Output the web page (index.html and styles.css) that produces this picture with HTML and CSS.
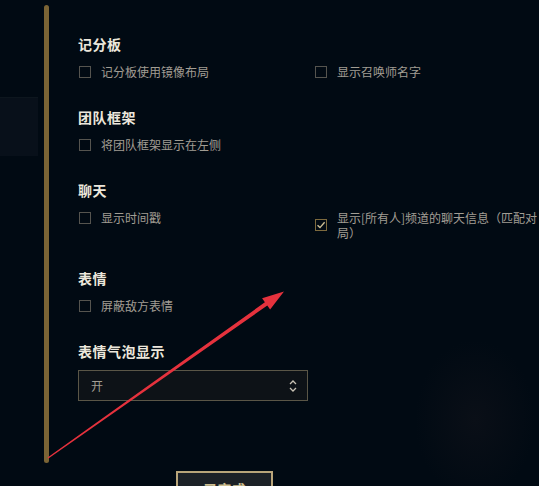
FILE: index.html
```html
<!DOCTYPE html>
<html lang="zh-CN">
<head>
    <meta charset="UTF-8">
    <meta name="viewport" content="width=device-width, initial-scale=1.0">
    <title>界面设置</title>
    <link rel="stylesheet" href="styles.css">
</head>
<body>
    <div class="page">
        <div class="side">
            <div class="side-panel"></div>
        </div>
        <div class="rail"></div>

        <div class="content">
            <div class="section">
                <div class="section-title">记分板</div>
                <div class="options">
                    <div class="option"><span class="box"></span><span class="label">记分板使用镜像布局</span></div>
                    <div class="option"><span class="box"></span><span class="label">显示召唤师名字</span></div>
                </div>
            </div>

            <div class="section">
                <div class="section-title">团队框架</div>
                <div class="options">
                    <div class="option"><span class="box"></span><span class="label">将团队框架显示在左侧</span></div>
                </div>
            </div>

            <div class="section">
                <div class="section-title">聊天</div>
                <div class="options">
                    <div class="option"><span class="box"></span><span class="label">显示时间戳</span></div>
                    <div class="option">
                        <span class="box checked">
                            <svg width="10" height="10" viewBox="0 0 10 10"><path d="M1.5 5.2 L4 7.6 L8.6 2.2" fill="none" stroke="#cdbf96" stroke-width="1.4"/></svg>
                        </span>
                        <span class="label wide">显示[所有人]频道的聊天信息（匹配对局）</span>
                    </div>
                </div>
            </div>

            <div class="section">
                <div class="section-title">表情</div>
                <div class="options">
                    <div class="option"><span class="box"></span><span class="label">屏蔽敌方表情</span></div>
                </div>
            </div>

            <div class="section">
                <div class="section-title">表情气泡显示</div>
                <div class="select">
                    <span class="select-value">开</span>
                    <svg class="select-arrows" width="8" height="14" viewBox="0 0 8 14">
                        <path d="M1 5 L4 2 L7 5" fill="none" stroke="#c8c2b4" stroke-width="1.3"/>
                        <path d="M1 9 L4 12 L7 9" fill="none" stroke="#c8c2b4" stroke-width="1.3"/>
                    </svg>
                </div>
            </div>
        </div>
    </div>

    <div class="footer">
        <button class="done">已完成</button>
    </div>

    <!-- 标注箭头 -->
    <svg class="annotation" width="539" height="486" viewBox="0 0 539 486">
        <polygon points="47.6,457.4 264.9,302.3 262.1,298.2 284,291.5 270.1,309.6 267.3,305.5 48.4,458.6" fill="#e5323d"/>
    </svg>
</body>
</html>
```

FILE: styles.css
```css
html, body {
    margin: 0;
    padding: 0;
    height: 100%;
    overflow: hidden;
}
body {
    font-family: "Noto Sans CJK SC", "Noto Sans", sans-serif;
    background-color: #010a13;
    background-image: radial-gradient(ellipse 60px 80px at 475px 420px, #0a0f17 0%, rgba(1, 10, 19, 0) 100%);
    position: relative;
    width: 539px;
    height: 486px;
}
.page {
    display: flex;
    align-items: flex-start;
}
.side {
    width: 44px;
    flex: none;
}
.side-panel {
    margin-top: 97px;
    width: 38px;
    height: 58px;
    background-color: #08101a;
    border-top: 1px solid #0d161e;
}
.rail {
    flex: none;
    width: 5px;
    height: 458px;
    margin-top: 5px;
    border-radius: 3px;
    background-color: #7b6435;
}
.content {
    padding-left: 29px;
    padding-top: 34px;
}
.section {
    margin-bottom: 28px;
}
.section-title {
    font-size: 14px;
    font-weight: bold;
    line-height: 20px;
    letter-spacing: 0.5px;
    color: #ece7dc;
    margin-bottom: 10px;
}
.options {
    display: flex;
    align-items: flex-start;
}
.option {
    display: flex;
    align-items: center;
    width: 235px;
    padding-left: 1px;
}
.box {
    flex: none;
    width: 10px;
    height: 10px;
    border: 1px solid #55544f;
    margin-right: 10px;
    display: flex;
    align-items: center;
    justify-content: center;
}
.box.checked {
    border-color: #7d6a3e;
}
.label {
    font-size: 12px;
    line-height: 15px;
    color: #a19d93;
}
.label.wide {
    width: 202px;
}
.select {
    box-sizing: border-box;
    width: 230px;
    height: 31px;
    margin-top: -1px;
    border: 1px solid #5a5647;
    background-color: #0d1217;
    display: flex;
    align-items: center;
    justify-content: space-between;
    padding: 0 10px 0 12px;
}
.select-value {
    font-size: 12px;
    color: #a19d93;
}
.select-arrows {
    display: block;
}
.footer {
    padding-left: 176px;
    padding-top: 8px;
}
.done {
    width: 97px;
    height: 36px;
    border: 2px solid #b9a57a;
    background-color: #1c2127;
    color: #cdbe91;
    font-family: "Noto Sans CJK SC", "Noto Sans", sans-serif;
    font-size: 14px;
    font-weight: bold;
    padding: 0;
}
.annotation {
    position: absolute;
    top: 0;
    left: 0;
    pointer-events: none;
}
```
